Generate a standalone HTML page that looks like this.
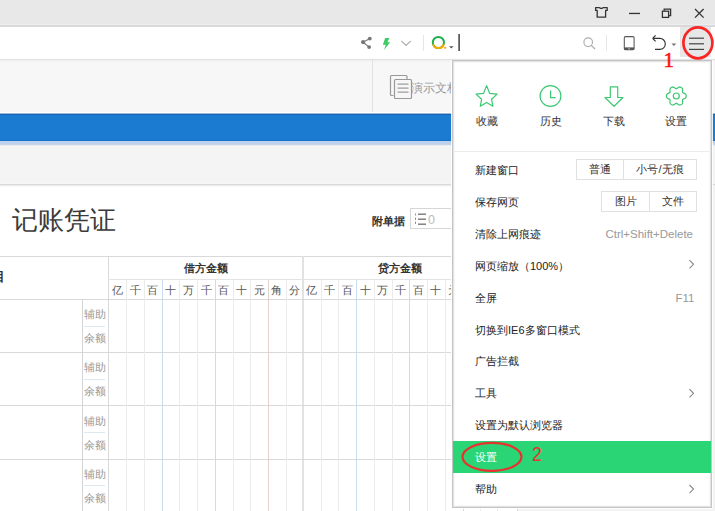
<!DOCTYPE html>
<html><head><meta charset="utf-8"><style>
html,body{margin:0;padding:0;width:715px;height:511px;overflow:hidden;background:#fff}
body{position:relative;font-family:"Liberation Sans",sans-serif}
.t{position:absolute;white-space:nowrap}
</style></head><body>
<div style="position:absolute;left:0px;top:0px;width:715px;height:24px;background:#e8e8e8;"></div>
<div style="position:absolute;left:0px;top:24px;width:715px;height:1px;background:#eeeeee;"></div>
<div style="position:absolute;left:0px;top:25px;width:715px;height:2px;background:#d9d9d9;"></div>
<div style="position:absolute;left:0px;top:27px;width:715px;height:32px;background:#ffffff;"></div>
<div style="position:absolute;left:0px;top:58px;width:715px;height:1px;background:#fbfbfb;"></div>
<div style="position:absolute;left:0px;top:59px;width:715px;height:1px;background:#e3e3e3;"></div>
<div style="position:absolute;left:0px;top:60px;width:715px;height:52px;background:#f7f7f7;"></div>
<div style="position:absolute;left:0px;top:60px;width:715px;height:1px;background:#efefef;"></div>
<div style="position:absolute;left:0px;top:61px;width:715px;height:1px;background:#f4f4f4;"></div>
<div style="position:absolute;left:372px;top:60px;width:1px;height:52px;background:#e2e2e2;"></div>
<div style="position:absolute;left:0px;top:112px;width:715px;height:1px;background:#ffffff;"></div>
<div style="position:absolute;left:0px;top:113px;width:715px;height:1px;background:#9fbad0;"></div>
<div style="position:absolute;left:0px;top:114px;width:715px;height:1px;background:#1766b8;"></div>
<div style="position:absolute;left:0px;top:115px;width:715px;height:25px;background:#1a7bd0;"></div>
<div style="position:absolute;left:0px;top:140px;width:715px;height:1px;background:#1570c6;"></div>
<div style="position:absolute;left:0px;top:141px;width:715px;height:3px;background:#bad2ec;"></div>
<div style="position:absolute;left:0px;top:144px;width:715px;height:1px;background:#c6d6e6;"></div>
<div style="position:absolute;left:0px;top:145px;width:715px;height:1px;background:#e6ebf0;"></div>
<div style="position:absolute;left:0px;top:146px;width:715px;height:1px;background:#f8f8f8;"></div>
<div style="position:absolute;left:0px;top:147px;width:715px;height:37px;background:#f4f4f4;"></div>
<div style="position:absolute;left:0px;top:183px;width:715px;height:1px;background:#f6f6f6;"></div>
<div style="position:absolute;left:0px;top:184px;width:715px;height:1px;background:#d8d8d8;"></div>
<div style="position:absolute;left:0px;top:185px;width:715px;height:1px;background:#ececec;"></div>
<div style="position:absolute;left:0px;top:186px;width:715px;height:1px;background:#f8f8f8;"></div>
<div style="position:absolute;left:517px;top:187px;width:198px;height:324px;background:#f3f3f3;"></div>
<div style="position:absolute;left:0px;top:187px;width:517px;height:324px;background:#ffffff;"></div>
<div class="t" style="left:11.5px;top:205px;font-size:25.5px;line-height:30px;color:#3a3a3a;">记账凭证</div>
<div class="t" style="left:372px;top:213px;font-size:11px;line-height:16px;color:#333;font-weight:bold">附单据</div>
<div style="position:absolute;left:410px;top:208px;width:120px;height:21px;border:1px solid #d6d6d6;background:#fff;box-sizing:border-box"></div>
<svg style="position:absolute;left:413px;top:211px" width="16" height="16"><g fill="#6a9fd6"><rect x="2" y="2.5" width="1" height="2"/><rect x="2" y="6.5" width="1" height="2.5"/><rect x="2" y="10.5" width="1" height="2.5"/></g><g fill="#555"><rect x="5" y="2.6" width="8" height="1.1"/><rect x="5" y="7.6" width="8" height="1.1"/><rect x="5" y="12.6" width="8" height="1.1"/></g></svg>
<div class="t" style="left:428px;top:212px;font-size:12.5px;line-height:16px;color:#bbb;">0</div>
<div style="position:absolute;left:0px;top:256px;width:517px;height:1px;background:#d9d9d9;"></div>
<div style="position:absolute;left:108px;top:256px;width:1px;height:255px;background:#d9d9d9;"></div>
<div style="position:absolute;left:302px;top:256px;width:2px;height:255px;background:#e2e2e2;"></div>
<div style="position:absolute;left:517px;top:256px;width:1px;height:255px;background:#d9d9d9;"></div>
<div style="position:absolute;left:497px;top:280px;width:1px;height:231px;background:#e3e3e3;"></div>
<div style="position:absolute;left:108px;top:279px;width:409px;height:1px;background:#e3e3e3;"></div>
<div style="position:absolute;left:0px;top:299px;width:517px;height:1px;background:#d9d9d9;"></div>
<div style="position:absolute;left:0px;top:352px;width:517px;height:1px;background:#d9d9d9;"></div>
<div style="position:absolute;left:0px;top:405px;width:517px;height:1px;background:#d9d9d9;"></div>
<div style="position:absolute;left:0px;top:459px;width:517px;height:1px;background:#d9d9d9;"></div>
<div style="position:absolute;left:82px;top:299px;width:1px;height:212px;background:#d4d4d4;"></div>
<div class="t" style="left:-8px;top:269px;font-size:12.5px;line-height:16px;color:#333;font-weight:bold">目</div>
<div class="t" style="left:156.2px;top:260px;width:100px;text-align:center;font-size:11px;line-height:16px;color:#333;font-weight:bold">借方金额</div>
<div class="t" style="left:350.2px;top:260px;width:100px;text-align:center;font-size:11px;line-height:16px;color:#333;font-weight:bold">贷方金额</div>
<div style="position:absolute;left:126px;top:280px;width:1px;height:231px;background:#ebebeb"></div>
<div style="position:absolute;left:144px;top:280px;width:1px;height:231px;background:#ebebeb"></div>
<div style="position:absolute;left:162px;top:280px;width:1px;height:231px;background:#c9ddee"></div>
<div style="position:absolute;left:179px;top:280px;width:1px;height:231px;background:#ebebeb"></div>
<div style="position:absolute;left:197px;top:280px;width:1px;height:231px;background:#ebebeb"></div>
<div style="position:absolute;left:215px;top:280px;width:1px;height:231px;background:#c9ddee"></div>
<div style="position:absolute;left:233px;top:280px;width:1px;height:231px;background:#ebebeb"></div>
<div style="position:absolute;left:250px;top:280px;width:1px;height:231px;background:#ebebeb"></div>
<div style="position:absolute;left:268px;top:280px;width:1px;height:231px;background:#e6d0c8"></div>
<div style="position:absolute;left:286px;top:280px;width:1px;height:231px;background:#ebebeb"></div>
<div class="t" style="left:108.50px;top:281.5px;width:17.73px;text-align:center;font-size:11px;line-height:16px;color:#555">亿</div>
<div class="t" style="left:126.23px;top:281.5px;width:17.73px;text-align:center;font-size:11px;line-height:16px;color:#555">千</div>
<div class="t" style="left:143.96px;top:281.5px;width:17.73px;text-align:center;font-size:11px;line-height:16px;color:#555">百</div>
<div class="t" style="left:161.69px;top:281.5px;width:17.73px;text-align:center;font-size:11px;line-height:16px;color:#555">十</div>
<div class="t" style="left:179.42px;top:281.5px;width:17.73px;text-align:center;font-size:11px;line-height:16px;color:#555">万</div>
<div class="t" style="left:197.15px;top:281.5px;width:17.73px;text-align:center;font-size:11px;line-height:16px;color:#555">千</div>
<div class="t" style="left:214.88px;top:281.5px;width:17.73px;text-align:center;font-size:11px;line-height:16px;color:#555">百</div>
<div class="t" style="left:232.61px;top:281.5px;width:17.73px;text-align:center;font-size:11px;line-height:16px;color:#555">十</div>
<div class="t" style="left:250.34px;top:281.5px;width:17.73px;text-align:center;font-size:11px;line-height:16px;color:#555">元</div>
<div class="t" style="left:268.07px;top:281.5px;width:17.73px;text-align:center;font-size:11px;line-height:16px;color:#555">角</div>
<div class="t" style="left:285.80px;top:281.5px;width:17.73px;text-align:center;font-size:11px;line-height:16px;color:#555">分</div>
<div style="position:absolute;left:321px;top:280px;width:1px;height:231px;background:#ebebeb"></div>
<div style="position:absolute;left:338px;top:280px;width:1px;height:231px;background:#ebebeb"></div>
<div style="position:absolute;left:356px;top:280px;width:1px;height:231px;background:#c9ddee"></div>
<div style="position:absolute;left:374px;top:280px;width:1px;height:231px;background:#ebebeb"></div>
<div style="position:absolute;left:392px;top:280px;width:1px;height:231px;background:#ebebeb"></div>
<div style="position:absolute;left:409px;top:280px;width:1px;height:231px;background:#c9ddee"></div>
<div style="position:absolute;left:427px;top:280px;width:1px;height:231px;background:#ebebeb"></div>
<div style="position:absolute;left:445px;top:280px;width:1px;height:231px;background:#ebebeb"></div>
<div style="position:absolute;left:463px;top:280px;width:1px;height:231px;background:#e6d0c8"></div>
<div style="position:absolute;left:480px;top:280px;width:1px;height:231px;background:#ebebeb"></div>
<div class="t" style="left:303.00px;top:281.5px;width:17.73px;text-align:center;font-size:11px;line-height:16px;color:#555">亿</div>
<div class="t" style="left:320.73px;top:281.5px;width:17.73px;text-align:center;font-size:11px;line-height:16px;color:#555">千</div>
<div class="t" style="left:338.46px;top:281.5px;width:17.73px;text-align:center;font-size:11px;line-height:16px;color:#555">百</div>
<div class="t" style="left:356.19px;top:281.5px;width:17.73px;text-align:center;font-size:11px;line-height:16px;color:#555">十</div>
<div class="t" style="left:373.92px;top:281.5px;width:17.73px;text-align:center;font-size:11px;line-height:16px;color:#555">万</div>
<div class="t" style="left:391.65px;top:281.5px;width:17.73px;text-align:center;font-size:11px;line-height:16px;color:#555">千</div>
<div class="t" style="left:409.38px;top:281.5px;width:17.73px;text-align:center;font-size:11px;line-height:16px;color:#555">百</div>
<div class="t" style="left:427.11px;top:281.5px;width:17.73px;text-align:center;font-size:11px;line-height:16px;color:#555">十</div>
<div class="t" style="left:444.84px;top:281.5px;width:17.73px;text-align:center;font-size:11px;line-height:16px;color:#555">元</div>
<div class="t" style="left:462.57px;top:281.5px;width:17.73px;text-align:center;font-size:11px;line-height:16px;color:#555">角</div>
<div class="t" style="left:480.30px;top:281.5px;width:17.73px;text-align:center;font-size:11px;line-height:16px;color:#555">分</div>
<div class="t" style="left:84px;top:306.0px;font-size:11px;line-height:16px;color:#999;">辅助</div>
<div style="position:absolute;left:84px;top:326px;width:21px;height:1px;background:#dce8f2;"></div>
<div class="t" style="left:84px;top:330.0px;font-size:11px;line-height:16px;color:#999;">余额</div>
<div class="t" style="left:84px;top:359.33px;font-size:11px;line-height:16px;color:#999;">辅助</div>
<div style="position:absolute;left:84px;top:379px;width:21px;height:1px;background:#dce8f2;"></div>
<div class="t" style="left:84px;top:383.33px;font-size:11px;line-height:16px;color:#999;">余额</div>
<div class="t" style="left:84px;top:412.65999999999997px;font-size:11px;line-height:16px;color:#999;">辅助</div>
<div style="position:absolute;left:84px;top:432px;width:21px;height:1px;background:#dce8f2;"></div>
<div class="t" style="left:84px;top:436.65999999999997px;font-size:11px;line-height:16px;color:#999;">余额</div>
<div class="t" style="left:84px;top:465.99px;font-size:11px;line-height:16px;color:#999;">辅助</div>
<div style="position:absolute;left:84px;top:485px;width:21px;height:1px;background:#dce8f2;"></div>
<div class="t" style="left:84px;top:489.99px;font-size:11px;line-height:16px;color:#999;">余额</div>
<svg style="position:absolute;left:0;top:0" width="715" height="60">
<g fill="#777"><circle cx="363.1" cy="42.1" r="2.1"/><circle cx="369.8" cy="38.6" r="1.9"/><circle cx="369.1" cy="47.1" r="1.9"/></g>
<path d="M363.2 42.2 L369.8 38.6 M363.2 42.2 L369.2 47.1" stroke="#777" stroke-width="1.1"/>
<path d="M385.2 38 L389.4 38 L387.4 42.3 L390.2 42.3 L384 50 L385.8 44.8 L382.8 44.8 Z" fill="#3ccc62"/>
<path d="M401.3 40.8 L406 45.4 L410.8 40.8" fill="none" stroke="#aaa" stroke-width="1.1"/>
<rect x="423" y="35" width="1" height="16" fill="#e6e6e6"/>
<circle cx="438.4" cy="42.5" r="5.6" fill="none" stroke="#1fb04c" stroke-width="2"/>
<path d="M443.73 44.2 A5.6 5.6 0 0 1 433.07 44.2" fill="none" stroke="#ffa800" stroke-width="2"/>
<circle cx="445.2" cy="47.8" r="1.1" fill="#ffa800"/>
<path d="M449 46.2 L453.6 46.2 L451.3 48.6 Z" fill="#555"/>
<rect x="458.4" y="34" width="1.4" height="17" fill="#333"/>
<circle cx="588.2" cy="42.2" r="4.3" fill="none" stroke="#aaa" stroke-width="1.1"/>
<path d="M591.3 45.3 L595 49" stroke="#aaa" stroke-width="1.2"/>
<rect x="606" y="35" width="1" height="16" fill="#e6e6e6"/>
<rect x="624.3" y="36.6" width="9.8" height="13" rx="1.2" fill="none" stroke="#555" stroke-width="1.05"/>
<rect x="624.3" y="47.4" width="9.8" height="2.6" fill="#555"/>
<rect x="628.3" y="48.4" width="1.8" height="1" fill="#ccc"/>
<path d="M652.6 38.4 L659.8 38.4 A5.5 5.5 0 0 1 659.8 49.4 L655 49.4 M652.6 38.4 L655.6 35.4 M652.6 38.4 L655.6 41.4" fill="none" stroke="#333" stroke-width="1.15"/>
<path d="M671.4 43.6 L676.4 43.6 L673.9 46 Z" fill="#777"/>
<rect x="680" y="27" width="31" height="30" fill="#e7e7e7"/>
<g fill="#444"><rect x="689" y="37.6" width="15" height="1.2"/><rect x="689" y="43.2" width="15" height="1.2"/><rect x="689" y="48.8" width="15" height="1.2"/></g>
<ellipse cx="697.9" cy="42.8" rx="14.5" ry="15.5" fill="none" stroke="#fa2525" stroke-width="2.7"/>
<path d="M595.6 7.6 L599 7.6 Q601.3 9.4 603.6 7.6 L607.2 7.6 L607.2 10.4 L605.6 10.4 L605.6 17.2 L597.2 17.2 L597.2 10.4 L595.6 10.4 Z" fill="none" stroke="#333" stroke-width="1.3" stroke-linejoin="round"/>
<rect x="629" y="12.8" width="11" height="1.3" fill="#333"/>
<path d="M664.2 10.8 L664.2 9.2 L670.6 9.2 L670.6 15.6 L668.8 15.6" fill="none" stroke="#333" stroke-width="1.3"/>
<rect x="662.4" y="11.2" width="6.2" height="6.2" fill="none" stroke="#333" stroke-width="1.3"/>
<path d="M695 9 L703.6 17.6 M703.6 9 L695 17.6" stroke="#333" stroke-width="1.3"/>
</svg>
<svg style="position:absolute;left:385px;top:70px" width="40" height="35">
<path d="M8.5 25.5 L6.5 25.5 Q5.5 25.5 5.5 24.5 L5.5 6.5 Q5.5 5.5 6.5 5.5 L21 5.5 Q22 5.5 22 6.5 L22 9" fill="none" stroke="#999" stroke-width="1.2"/>
<rect x="9.5" y="9.5" width="17" height="19" rx="1" fill="#f7f7f7" stroke="#999" stroke-width="1.2"/>
<rect x="12.5" y="13.5" width="11" height="1.2" fill="#999"/><rect x="12.5" y="17.5" width="11" height="1.2" fill="#999"/><rect x="12.5" y="21.5" width="11" height="1.2" fill="#999"/>
</svg>
<div class="t" style="left:411px;top:79px;font-size:12px;line-height:18px;color:#9a9a9a;">演示文档</div>
<div style="position:absolute;left:452px;top:60px;width:260px;height:448px;box-sizing:border-box;border:1px solid #c4c4c4;background:#fff;box-shadow:-1px 0 0 rgba(255,255,255,0.9), 1px 0 0 rgba(255,255,255,0.9), 0 1px 0 rgba(255,255,255,0.9), inset 0 0 0 1px #e4e4e4, inset 0 0 0 2px #f8f8f8"></div>
<svg style="position:absolute;left:0;top:0" width="715" height="130">
<path d="M486.6 85.6 L489.6 93.3 L497.1 94.1 L491.6 99.3 L492.9 106.2 L486.6 102.4 L480.3 106.2 L481.6 99.3 L476.1 94.1 L483.6 93.3 Z" fill="none" stroke="#3cc873" stroke-width="1.2" stroke-linejoin="round"/>
<circle cx="550.5" cy="96" r="10.4" fill="none" stroke="#3cc873" stroke-width="1.2"/>
<path d="M550.6 90.6 L550.6 97.6 L555.6 97.6" fill="none" stroke="#3cc873" stroke-width="1.2"/>
<path d="M610.3 86.8 L617.7 86.8 L617.7 97.5 L623 97.5 L614 106.3 L605 97.5 L610.3 97.5 Z" fill="none" stroke="#3cc873" stroke-width="1.2" stroke-linejoin="round"/>

<path d="M686.20 96.00 L686.18 95.48 L686.07 94.97 L685.84 94.49 L685.47 94.05 L684.97 93.68 L684.41 93.37 L683.83 93.11 L683.30 92.88 L682.89 92.64 L682.62 92.35 L682.50 91.97 L682.50 91.50 L682.56 90.93 L682.63 90.30 L682.65 89.65 L682.57 89.04 L682.38 88.50 L682.07 88.05 L681.69 87.71 L681.25 87.43 L680.79 87.19 L680.30 87.03 L679.76 86.98 L679.20 87.09 L678.62 87.33 L678.07 87.66 L677.56 88.04 L677.10 88.38 L676.69 88.62 L676.30 88.70 L675.91 88.62 L675.50 88.38 L675.04 88.04 L674.53 87.66 L673.98 87.33 L673.40 87.09 L672.84 86.98 L672.30 87.03 L671.81 87.19 L671.35 87.43 L670.91 87.71 L670.53 88.05 L670.22 88.50 L670.03 89.04 L669.95 89.65 L669.97 90.30 L670.04 90.93 L670.10 91.50 L670.10 91.97 L669.98 92.35 L669.71 92.64 L669.30 92.88 L668.77 93.11 L668.19 93.37 L667.63 93.68 L667.13 94.05 L666.76 94.49 L666.53 94.97 L666.42 95.48 L666.40 96.00 L666.42 96.52 L666.53 97.03 L666.76 97.51 L667.13 97.95 L667.63 98.32 L668.19 98.63 L668.77 98.89 L669.30 99.12 L669.71 99.36 L669.98 99.65 L670.10 100.03 L670.10 100.50 L670.04 101.07 L669.97 101.70 L669.95 102.35 L670.03 102.96 L670.22 103.50 L670.53 103.95 L670.91 104.29 L671.35 104.57 L671.81 104.81 L672.30 104.97 L672.84 105.02 L673.40 104.91 L673.98 104.67 L674.53 104.34 L675.04 103.96 L675.50 103.62 L675.91 103.38 L676.30 103.30 L676.69 103.38 L677.10 103.62 L677.56 103.96 L678.07 104.34 L678.62 104.67 L679.20 104.91 L679.76 105.02 L680.30 104.97 L680.79 104.81 L681.25 104.57 L681.69 104.29 L682.07 103.95 L682.38 103.50 L682.57 102.96 L682.65 102.35 L682.63 101.70 L682.56 101.07 L682.50 100.50 L682.50 100.03 L682.62 99.65 L682.89 99.36 L683.30 99.12 L683.83 98.89 L684.41 98.63 L684.97 98.32 L685.47 97.95 L685.84 97.51 L686.07 97.03 L686.18 96.52 L686.20 96.00 Z" fill="none" stroke="#3cc873" stroke-width="1.2"/>
<circle cx="676.3" cy="96" r="3" fill="none" stroke="#3cc873" stroke-width="1.2"/>
</svg>
<div class="t" style="left:456.6px;top:113px;width:60px;text-align:center;font-size:11px;line-height:16px;color:#333">收藏</div>
<div class="t" style="left:520.5px;top:113px;width:60px;text-align:center;font-size:11px;line-height:16px;color:#333">历史</div>
<div class="t" style="left:584.0px;top:113px;width:60px;text-align:center;font-size:11px;line-height:16px;color:#333">下载</div>
<div class="t" style="left:646.3px;top:113px;width:60px;text-align:center;font-size:11px;line-height:16px;color:#333">设置</div>
<div style="position:absolute;left:453px;top:151px;width:258px;height:1px;background:#ececec;"></div>
<div class="t" style="left:475px;top:154.0px;font-size:11px;line-height:32px;color:#222">新建窗口</div>
<div class="t" style="left:475px;top:185.9px;font-size:11px;line-height:32px;color:#222">保存网页</div>
<div class="t" style="left:475px;top:217.8px;font-size:11px;line-height:32px;color:#222">清除上网痕迹</div>
<div class="t" style="left:475px;top:249.7px;font-size:11px;line-height:32px;color:#222">网页缩放（100%）</div>
<div class="t" style="left:475px;top:281.6px;font-size:11px;line-height:32px;color:#222">全屏</div>
<div class="t" style="left:475px;top:313.5px;font-size:11px;line-height:32px;color:#222">切换到IE6多窗口模式</div>
<div class="t" style="left:475px;top:345.4px;font-size:11px;line-height:32px;color:#222">广告拦截</div>
<div class="t" style="left:475px;top:377.3px;font-size:11px;line-height:32px;color:#222">工具</div>
<div class="t" style="left:475px;top:409.2px;font-size:11px;line-height:32px;color:#222">设置为默认浏览器</div>
<div style="position:absolute;left:453px;top:441px;width:258px;height:32px;background:#2ad576"></div>
<div class="t" style="left:475px;top:441.1px;font-size:11px;line-height:32px;color:#fff">设置</div>
<div class="t" style="left:475px;top:473.0px;font-size:11px;line-height:32px;color:#222">帮助</div>
<div style="position:absolute;left:576px;top:159px;width:121px;height:21px;box-sizing:border-box;border:1px solid #e0e0e0"></div>
<div style="position:absolute;left:623px;top:160px;width:1px;height:19px;background:#e0e0e0;"></div>
<div class="t" style="left:577px;top:160px;width:46px;text-align:center;font-size:11px;line-height:19px;color:#333">普通</div>
<div class="t" style="left:624px;top:160px;width:72px;text-align:center;font-size:11px;line-height:19px;color:#333">小号/无痕</div>
<div style="position:absolute;left:601px;top:191px;width:96px;height:21px;box-sizing:border-box;border:1px solid #e0e0e0"></div>
<div style="position:absolute;left:649px;top:192px;width:1px;height:19px;background:#e0e0e0;"></div>
<div class="t" style="left:602px;top:192px;width:47px;text-align:center;font-size:11px;line-height:19px;color:#333">图片</div>
<div class="t" style="left:650px;top:192px;width:46px;text-align:center;font-size:11px;line-height:19px;color:#333">文件</div>
<div class="t" style="left:560px;top:218px;width:133px;text-align:right;font-size:11.5px;line-height:32px;color:#999">Ctrl+Shift+Delete</div>
<div class="t" style="left:561.5px;top:281.6px;width:133px;text-align:right;font-size:11.5px;line-height:32px;color:#999">F11</div>
<svg style="position:absolute;left:0;top:0" width="715" height="511">
<path d="M689.5 260.2 L693.5 264.3 L689.5 268.4" fill="none" stroke="#888" stroke-width="1.1"/>
<path d="M689.5 389.2 L693.5 393.3 L689.5 397.4" fill="none" stroke="#888" stroke-width="1.1"/>
<path d="M689.5 485 L693.5 489.1 L689.5 493.2" fill="none" stroke="#888" stroke-width="1.1"/>
<ellipse cx="492" cy="456.8" rx="29.5" ry="14" fill="none" stroke="#e8322e" stroke-width="2.2"/>
</svg>
<div class="t" style="left:532px;top:439px;font-size:20px;line-height:30px;color:#e8322e;transform:scaleX(0.88);transform-origin:0 0">2</div>
<div class="t" style="left:663.5px;top:48px;font-size:21px;line-height:24px;color:#ff0a0a;-webkit-text-stroke:0.5px #ff0a0a;font-family:'Liberation Serif',serif">1</div>
</body></html>
